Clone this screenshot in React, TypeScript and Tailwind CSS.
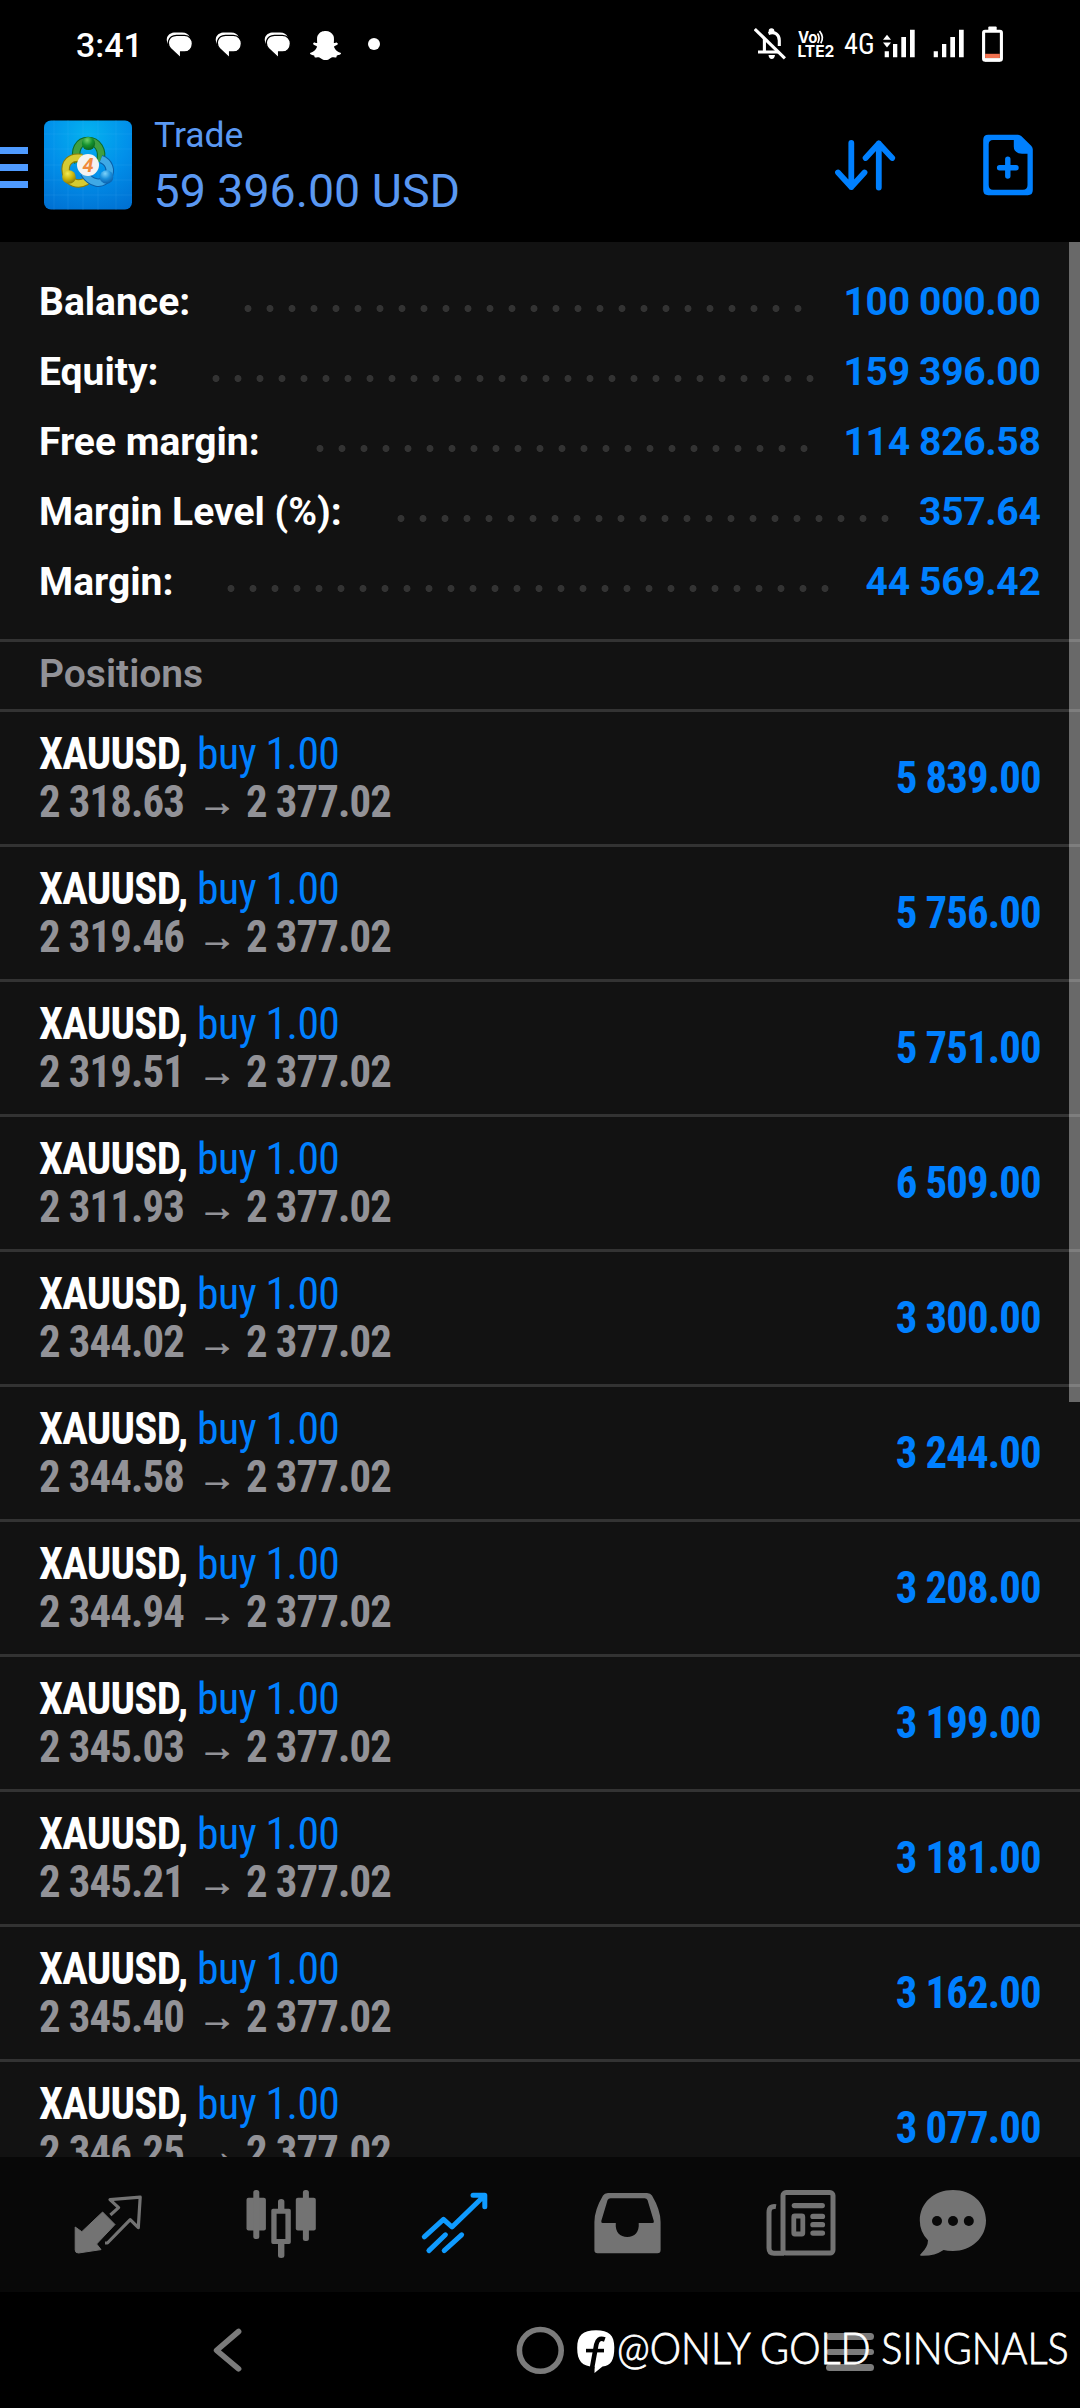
import type { ReactNode } from "react";
import { FaSnapchatGhost } from "react-icons/fa";

type IconProps = { x: number; y: number; w: number; h: number; className?: string; children: ReactNode };

/* Icons are drawn in screen units; x and y give the origin of the drawing. */
function Icon({ x, y, w, h, className = "", children }: IconProps) {
  return (
    <svg width={w} height={h} viewBox={`${x} ${y} ${w} ${h}`} className={`shrink-0 ${className}`} fill="none">
      {children}
    </svg>
  );
}

const summary = [
  { label: "Balance:", value: "100 000.00", start: 205, dots: 26 },
  { label: "Equity:", value: "159 396.00", start: 173, dots: 28 },
  { label: "Free margin:", value: "114 826.58", start: 277, dots: 23 },
  { label: "Margin Level (%):", value: "357.64", start: 358, dots: 23 },
  { label: "Margin:", value: "44 569.42", start: 188, dots: 28 },
];

const positions = [
  ["2 318.63", "5 839.00"],
  ["2 319.46", "5 756.00"],
  ["2 319.51", "5 751.00"],
  ["2 311.93", "6 509.00"],
  ["2 344.02", "3 300.00"],
  ["2 344.58", "3 244.00"],
  ["2 344.94", "3 208.00"],
  ["2 345.03", "3 199.00"],
  ["2 345.21", "3 181.00"],
  ["2 345.40", "3 162.00"],
  ["2 346.25", "3 077.00"],
];

function MessageIcon() {
  return (
    <Icon x={0} y={0} w={27} h={27}>
      <path d="M8 0.4 H16 C20 .4 22.5 2 23.6 5 L10 20 L3.5 14 C-1.5 8 .5 1.5 8 .4 Z" fill="#fff" />
      <path
        d="M10.5 3.4 H18.5 C23 3.4 26.4 7 26.4 11.6 C26.4 16.4 23 20 18.5 20 H14.6 V26 L4.5 16.5 C.8 12 1.6 3.8 10.5 3.4 Z"
        fill="#fff"
        stroke="#000"
        strokeWidth="1.3"
      />
    </Icon>
  );
}

function StatusBar() {
  return (
    <div className="flex h-[90px] items-start bg-black text-white">
      <span className="ml-[76px] mt-[25px] w-[90px] text-[34px] leading-[40px] font-medium">3:41</span>
      <div className="mt-8 flex gap-[22px]">
        <MessageIcon />
        <MessageIcon />
        <MessageIcon />
      </div>
      <FaSnapchatGhost className="mt-[30px] ml-[19px] size-[31px]" />
      <span className="mt-[38px] ml-[27px] size-3 rounded-full bg-white" />

      <div className="mt-6 ml-auto flex items-start pr-[77px]">
        <Icon x={754} y={24} w={33} h={40}>
          <g stroke="#fff" strokeWidth="3.1">
            <path d="M764.4 38 V51.7 M758 52 H778 M768.5 33.5 C774.5 31 779.3 34.5 779.3 40.5 V46" />
            <path d="M754.8 29 L784.9 58.4" />
          </g>
          <circle cx="771.5" cy="31" r="2.8" fill="#fff" />
          <path d="M768.5 55 H775 Q774.5 59 771.7 59 Q769 59 768.5 55 Z" fill="#fff" />
        </Icon>
        <Icon x={798} y={24} w={37} h={40} className="ml-[11px]">
          <text x="798" y="42.6" fontSize="15.5" fontWeight="700" fill="#fff" textLength="19.5" lengthAdjust="spacingAndGlyphs" fontFamily="Inter, sans-serif">
            Vo
          </text>
          <path d="M817.5 33.5 Q820.5 37.5 817.8 43 M819.5 31 Q824.5 37 820.8 43.2" stroke="#fff" strokeWidth="1.7" />
          <text x="797.4" y="57.4" fontSize="16.4" fontWeight="700" fill="#fff" textLength="37" lengthAdjust="spacingAndGlyphs" fontFamily="Inter, sans-serif">
            LTE2
          </text>
        </Icon>
        <span className="ml-[9px] w-[39px] origin-left scale-x-[0.94] text-[30px] leading-[39px] [font-stretch:condensed]">4G</span>
        <Icon x={882} y={24} w={34} h={40} className="ml-[-1px]">
          <path
            d="M884.7 51.3h4.2v6h-4.2z M893 44h4.3v13.3h-4.3z M901.3 37h4.7v20.3h-4.7z M910 29.7h4.7v27.6h-4.7z M887 34.7l4 5h-8z M887 47.6l4-5h-8z"
            fill="#fff"
          />
        </Icon>
        <Icon x={932} y={24} w={34} h={40} className="ml-4">
          <path d="M933.7 51.3h4.2v6h-4.2z M942 44h4.3v13.3H942z M950.3 37h4.7v20.3h-4.7z M959 29.7h4.7v27.6H959z" fill="#fff" />
        </Icon>
        <Icon x={981} y={24} w={22} h={40} className="ml-[15px]">
          <rect x="988.3" y="26.6" width="8.4" height="5" rx="1" fill="#fff" />
          <rect x="983.6" y="31.2" width="17.8" height="29" rx="1.5" stroke="#fff" strokeWidth="3.1" />
          <rect x="985.1" y="53.8" width="14.8" height="4.2" fill="#f0714f" />
          <path d="M985 59.8 H1000" stroke="#fff" strokeWidth="3.4" />
        </Icon>
      </div>
    </div>
  );
}

function AppLogo() {
  return (
    <svg width="88" height="90" viewBox="0 0 88 90" className="shrink-0">
      <defs>
        <radialGradient id="bg" cx="0.5" cy="0.15" r="0.95">
          <stop offset="0" stopColor="#04b2ef" />
          <stop offset="0.5" stopColor="#0190ea" />
          <stop offset="1" stopColor="#0070d2" />
        </radialGradient>
        <radialGradient id="green" cx="0.4" cy="0.25" r="0.8">
          <stop offset="0" stopColor="#6fd06a" />
          <stop offset="0.5" stopColor="#16922f" />
          <stop offset="1" stopColor="#075f1c" />
        </radialGradient>
        <radialGradient id="gold" cx="0.4" cy="0.25" r="0.8">
          <stop offset="0" stopColor="#f2ec55" />
          <stop offset="0.5" stopColor="#cbb70f" />
          <stop offset="1" stopColor="#857404" />
        </radialGradient>
        <radialGradient id="blue" cx="0.4" cy="0.25" r="0.8">
          <stop offset="0" stopColor="#7dd3fb" />
          <stop offset="0.5" stopColor="#1a8fdb" />
          <stop offset="1" stopColor="#0959a5" />
        </radialGradient>
      </defs>
      <rect width="88" height="89" y=".5" rx="7" fill="url(#bg)" />
      <path d="M10 0v90M24 0v90M39 0v90M54 0v90M72 0v90M0 14h88M0 29h88M0 45h88M0 60h88M0 75h88" stroke="#5fc4ff" strokeOpacity="0.13" />
      <g fill="none">
        <path d="M34 42 C29 30 35 21 44 21 C53 21 60 30 56 42" stroke="#0c6b29" strokeWidth="8.5" />
        <path d="M34 42 C29 30 35 21 44 21 C53 21 60 30 56 42" stroke="#3f9f42" strokeWidth="6.4" />
        <path d="M38 38 C26 36 20 43 22 53 C24 63 34 66 43 61" stroke="#8a7c0a" strokeWidth="8.5" />
        <path d="M38 38 C26 36 20 43 22 53 C24 63 34 66 43 61" stroke="#d6cb33" strokeWidth="6.4" />
        <path d="M57 39 C65 42 68 50 64 57 C58 66 47 64 40 53" stroke="#0a5fa8" strokeWidth="8.5" />
        <path d="M57 39 C65 42 68 50 64 57 C58 66 47 64 40 53" stroke="#3fa9e6" strokeWidth="6.4" />
      </g>
      <circle cx="44.5" cy="23.5" r="6.6" fill="url(#green)" />
      <circle cx="25" cy="57" r="6.8" fill="url(#gold)" />
      <circle cx="62.5" cy="57" r="6.8" fill="url(#blue)" />
      <circle cx="44" cy="45" r="11" fill="#f4f2f0" />
      <text x="44" y="52" textAnchor="middle" fontSize="20" fontStyle="italic" fontWeight="700" fill="#f08a3c" fontFamily="Roboto, sans-serif">
        4
      </text>
    </svg>
  );
}

function Header() {
  return (
    <header className="flex h-[152px] items-start bg-black text-[#5a98f2]">
      <div className="mt-[57px] flex w-7 flex-col gap-[10px]">
        <span className="h-[7px] bg-[#4f9bff]" />
        <span className="h-[7px] bg-[#4f9bff]" />
        <span className="h-[7px] bg-[#4f9bff]" />
      </div>
      <div className="mt-[30px] ml-4">
        <AppLogo />
      </div>
      <div className="mt-[25px] ml-[22px] flex flex-col gap-[9px]">
        <span className="text-[35.5px] leading-[40px]">Trade</span>
        <span className="ml-[-0.5px] text-[46.5px] leading-[54px]">59 396.00 USD</span>
      </div>
      <div className="mt-10 ml-auto flex gap-[84px] pr-[45px] text-[#0080ff]">
        <Icon x={833} y={130} w={66} h={70}>
          <path
            d="M851.3 143 V187 M838 172.5 L851.3 187 L864.5 172.5 M878.8 187.5 V143.5 M865.6 158 L878.8 143.5 L892.2 158"
            stroke="currentColor"
            strokeWidth="5.8"
            strokeLinecap="round"
            strokeLinejoin="round"
          />
        </Icon>
        <Icon x={983} y={130} w={52} h={70}>
          <path
            fillRule="evenodd"
            d="M988.2 134.7 H1018 Q1020 134.7 1021.5 136.2 L1031.4 146 Q1032.8 147.5 1032.8 149.5 V190 Q1032.8 195.2 1027.8 195.2 H988.2 Q983.2 195.2 983.2 190 V140 Q983.2 134.7 988.2 134.7 Z M993 140 Q988.7 140 988.7 144.5 V185 Q988.7 189.8 993 189.8 H1023 Q1027.5 189.8 1027.5 185 V153.8 H1022 Q1013.8 153 1013.8 146.5 V140 Z"
            fill="currentColor"
          />
          <path d="M999.6 167.7 H1016 M1007.8 159.3 V176" stroke="currentColor" strokeWidth="5.4" strokeLinecap="round" />
        </Icon>
      </div>
    </header>
  );
}

function Summary() {
  return (
    <section className="border-b-[3px] border-[#333] pt-[25px] pr-[39.5px] pb-[22px] pl-[39px]">
      {summary.map((row) => (
        <div key={row.label} className="flex h-[70px] items-center text-[39px] leading-[70px] font-bold whitespace-nowrap">
          <span className="shrink-0 text-white" style={{ width: row.start - 7.5 }}>
            {row.label}
          </span>
          <span
            className="mt-[12px] h-[7px] bg-[radial-gradient(circle_at_center,#333_3.1px,transparent_3.8px)] bg-[length:22px_7px] bg-repeat-x"
            style={{ width: row.dots * 22 }}
          />
          <span className="ml-auto tracking-[-0.3px] text-[#0080ff]">{row.value}</span>
        </div>
      ))}
    </section>
  );
}

function Position({ open, profit }: { open: string; profit: string }) {
  return (
    <li className="flex h-[135px] shrink-0 items-start justify-between border-b-[3px] border-[#333] pr-[39.5px] pl-[39px] text-[45px] font-bold whitespace-pre [font-stretch:condensed]">
      <div className="flex flex-col pt-[18px] leading-[48px]">
        <div className="flex">
          <span className="w-[158px] origin-left scale-x-[0.955] tracking-[-0.8px] text-white">XAUUSD,</span>
          <span className="origin-left scale-x-[0.97] font-normal tracking-[-0.6px] text-[#0080ff]">buy 1.00</span>
        </div>
        <div className="flex tracking-[-0.9px] text-[#929297]">
          <span className="w-[163px] origin-left scale-x-[0.95]">{open}</span>
          <span className="ml-[-4px] w-12 font-['Liberation_Sans'] text-[38px] [-webkit-text-stroke:1px_#929297]">→</span>
          <span className="origin-left scale-x-[0.95]">2 377.02</span>
        </div>
      </div>
      <span className="origin-right scale-x-[0.95] tracking-[-0.9px] leading-[132px] text-[#0080ff]">{profit}</span>
    </li>
  );
}

function TabBar() {
  return (
    <nav className="flex h-[135px] shrink-0 items-start bg-[#080808] pt-[30px] pl-[22px] text-[#737373]">
      <Icon x={22} y={2187} w={173} h={75}>
        <path d="M102.6 2212 L115 2224.5 L96.6 2244 L101 2249.6 L78.5 2253 Q75.2 2253 75.2 2250 L75.2 2227 L81.8 2231.7 Z" fill="currentColor" stroke="currentColor" strokeWidth="1" strokeLinejoin="round" />
        <path d="M110.4 2215 L118.6 2207.6 L110 2199.6 L140.2 2197.2 L138.3 2227.6 L130.2 2219.6 L107.4 2243 H105" stroke="currentColor" strokeWidth="3.2" strokeLinejoin="round" />
      </Icon>
      <Icon x={195} y={2187} w={173} h={75}>
        <g fill="currentColor">
          <rect x="246.5" y="2197.7" width="19.4" height="32.8" rx="2" />
          <rect x="253.3" y="2190" width="6" height="49" rx="2.5" />
          <rect x="295.8" y="2197.7" width="20" height="32.8" rx="2" />
          <rect x="302.9" y="2190" width="6" height="51" rx="2.5" />
          <path fillRule="evenodd" d="M273 2208.7 H289 Q290.8 2208.7 290.8 2210.5 V2242.3 Q290.8 2244 289 2244 H273 Q271.3 2244 271.3 2242.3 V2210.5 Q271.3 2208.7 273 2208.7 Z M276.6 2213.8 V2239 H285.4 V2213.8 Z" />
          <path d="M278 2210 V2201.5 Q278 2199 281.2 2199 Q284.4 2199 284.4 2201.5 V2210 Z M278 2243 V2255.5 Q278 2258 281.2 2258 Q284.4 2258 284.4 2255.5 V2243 Z" />
        </g>
      </Icon>
      <Icon x={368} y={2187} w={173} h={75} className="text-[#0f9bff]">
        <path
          d="M424.3 2236.8 L443.5 2219.3 L452 2227 L483.5 2196.5 M473 2195.3 H484.8 V2206.8"
          stroke="currentColor"
          strokeWidth="5"
          strokeLinecap="round"
          strokeLinejoin="round"
        />
        <path d="M428.9 2250.6 L445.4 2234.8 M444.2 2250.6 L461.6 2234.8" stroke="currentColor" strokeWidth="5" strokeLinecap="round" />
      </Icon>
      <Icon x={541} y={2187} w={173} h={75}>
        <path
          fillRule="evenodd"
          d="M608 2193 H647 Q650.5 2193 652 2195.5 Q660.6 2210 660.6 2222 V2250 Q660.6 2253.2 657.5 2253.2 H597.5 Q594.4 2253.2 594.4 2250 V2222 Q594.4 2210 603 2195.5 Q604.5 2193 608 2193 Z M610.5 2198.2 Q608.5 2198.2 607.6 2200 L601.3 2221 Q601 2223 602.5 2223 H615.8 C615 2232 620 2237 627.3 2237 C634.5 2237 639.5 2232 638.7 2223 H652.5 Q654.4 2223 653.8 2221 L647.5 2200 Q646.6 2198.2 644.6 2198.2 Z"
          fill="currentColor"
        />
      </Icon>
      <Icon x={714} y={2187} w={173} h={75}>
        <g stroke="currentColor" strokeWidth="5">
          <rect x="783" y="2192.6" width="50" height="60.5" rx="3" />
          <path d="M776 2206.6 Q769 2205.5 769 2212.5 V2248 Q769 2253.2 774 2253.2 H784" />
          <rect x="793.8" y="2216" width="9" height="18" rx="1" strokeWidth="4.8" />
        </g>
        <g fill="currentColor">
          <rect x="791.7" y="2203" width="33.2" height="5.2" rx="2.6" />
          <rect x="810.3" y="2213.7" width="14.8" height="5.3" rx="2.6" />
          <rect x="810.3" y="2222" width="14.8" height="5.3" rx="2.6" />
          <rect x="810.3" y="2230.4" width="14.8" height="5.3" rx="2.6" />
        </g>
      </Icon>
      <Icon x={887} y={2187} w={132} h={75}>
        <path
          d="M953 2190 C972 2190 986 2203 986 2220.5 C986 2238 971 2251 953 2251 Q947 2251 943.6 2250 Q934 2256.5 920.5 2255.8 Q919.5 2255 921 2253.8 Q928 2247 928 2240.3 Q919.8 2232 919.8 2220.5 C919.8 2203 934 2190 953 2190 Z"
          fill="currentColor"
        />
        <g fill="#080808">
          <circle cx="937" cy="2221" r="5" />
          <circle cx="953" cy="2221" r="5" />
          <circle cx="968.8" cy="2221" r="5" />
        </g>
      </Icon>
    </nav>
  );
}

function SystemNav() {
  return (
    <div className="relative flex h-[116px] shrink-0 items-start bg-black pt-[30px] text-[#7b7b7b]">
      <Icon x={210} y={2322} w={36} h={56} className="ml-[210px]">
        <path d="M238.6 2331.5 L216.6 2350.3 L238.6 2368.8" stroke="currentColor" strokeWidth="5.6" strokeLinecap="round" strokeLinejoin="round" />
      </Icon>
      <Icon x={512} y={2322} w={56} h={56} className="ml-[266px]">
        <circle cx="540.3" cy="2350.4" r="20.9" stroke="currentColor" strokeWidth="5.6" />
      </Icon>
      <div className="mt-[11px] ml-[258px] flex w-12 flex-col gap-[9px]">
        <span className="h-[6.5px] rounded-full bg-[#7b7b7b]" />
        <span className="h-[6.5px] rounded-full bg-[#7b7b7b]" />
        <span className="h-[6.5px] rounded-full bg-[#7b7b7b]" />
      </div>
      <div className="absolute top-[30px] left-[577px] flex items-start text-white">
        <Icon x={577} y={2322} w={40} h={56}>
          <path
            d="M596 2330.3 C609 2330.3 614.3 2335 614.3 2347.5 C614.3 2360 611 2365.8 602.5 2366.6 L594.5 2373 L594.6 2366.8 C582 2366.5 577.2 2361 577.2 2348 C577.2 2335 583 2330.3 596 2330.3 Z"
            fill="#fff"
          />
          <path d="M604.8 2339.5 C599.5 2337.5 597.3 2340 596.3 2344.5 L592 2368" stroke="#000" strokeWidth="4.6" />
          <path d="M586 2350.6 H604" stroke="#000" strokeWidth="3.6" />
        </Icon>
        <span className="mt-[-2px] origin-left scale-x-[0.931] font-[Lato] text-[42.5px] leading-[56px] font-light whitespace-nowrap [-webkit-text-stroke:0.8px_#fff]">
          @ONLY GOLD SINGNALS
        </span>
      </div>
    </div>
  );
}

export default function App() {
  return (
    <div className="flex h-[2408px] w-[1080px] flex-col overflow-hidden bg-black font-[Roboto,sans-serif]">
      <StatusBar />
      <Header />
      <main className="relative min-h-0 flex-1 overflow-hidden bg-[#121212]">
        <Summary />
        <h2 className="h-[70px] border-b-[3px] border-[#333] pl-[39px] text-[39px] leading-[64px] font-semibold text-[#929297]">Positions</h2>
        <ul className="flex flex-col">
          {positions.map(([open, profit]) => (
            <Position key={open} open={open} profit={profit} />
          ))}
        </ul>
        <div className="absolute top-0 right-0 h-[1160px] w-[11px] bg-white/37" />
      </main>
      <TabBar />
      <SystemNav />
    </div>
  );
}
